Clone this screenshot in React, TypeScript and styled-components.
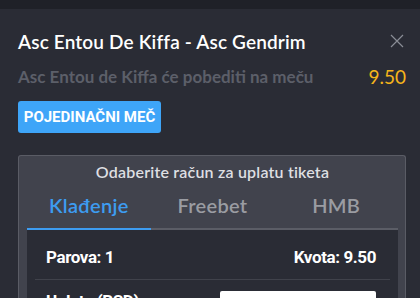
import { createGlobalStyle, styled } from "styled-components";

const GlobalStyle = createGlobalStyle`
  html, body {
    margin: 0;
    padding: 0;
    background: #2a2c35;
    font-family: Lato, "Open Sans", sans-serif;
    overflow: hidden;
  }
`;

const condensed = `"Liberation Sans Narrow", Roboto, sans-serif`;

const TopStrip = styled.div`
  height: 9px;
  background: #1f2128;
`;

const Panel = styled.div`
  padding: 19px 14px 0 18px;
`;

const HeaderRow = styled.div`
  display: flex;
  align-items: center;
  justify-content: space-between;
  height: 26px;
`;

const Title = styled.h2`
  margin: 0;
  font-size: 19px;
  font-weight: 600;
  color: #ffffff;
  letter-spacing: 0.15px;
`;

const CloseButton = styled.button`
  width: 16px;
  height: 16px;
  padding: 0;
  margin-right: 1px;
  border: none;
  background: transparent;
  display: flex;
  align-items: center;
  justify-content: center;
  cursor: pointer;
`;

const PickRow = styled.div`
  display: flex;
  align-items: center;
  justify-content: space-between;
  margin-top: 10px;
  height: 24px;
`;

const Pick = styled.span`
  font-size: 17px;
  font-weight: 700;
  color: #5c5f69;
`;

const Odds = styled.span`
  font-size: 19px;
  color: #f5b51b;
`;

const TypeBadge = styled.div`
  display: inline-flex;
  align-items: center;
  justify-content: center;
  margin-top: 13px;
  width: 143px;
  height: 32px;
  border-radius: 3px;
  background: #3ea5f8;
  color: #ffffff;
  font-family: ${condensed};
  font-size: 15px;
  font-weight: 700;
`;

const Card = styled.div`
  margin-top: 22px;
  border: 1px solid #5a5c65;
  border-bottom: none;
  border-radius: 3px 3px 0 0;
  background: #41434d;
  padding: 0 7px 0 8px;
  height: 200px;
`;

const CardTitle = styled.div`
  text-align: center;
  font-size: 16px;
  font-weight: 600;
  color: #dedfe2;
  padding-top: 6px;
  height: 22px;
  letter-spacing: 0.2px;
`;

const Tabs = styled.div`
  display: grid;
  grid-template-columns: repeat(3, 1fr);
  margin-top: 9px;
`;

const Tab = styled.div<{ $active?: boolean }>`
  text-align: center;
  font-size: 20px;
  font-weight: 600;
  letter-spacing: 0.3px;
  line-height: 24px;
  color: ${(p) => (p.$active ? "#3d9cf0" : "#9a9ca2")};
  padding-bottom: 11px;
  border-bottom: 2px solid ${(p) => (p.$active ? "#3d9cf0" : "#5b5d66")};
`;

const Inner = styled.div`
  background: #2a2c35;
  padding: 0 8px;
`;

const SummaryRow = styled.div`
  display: flex;
  justify-content: space-between;
  align-items: center;
  padding: 5px 14px 0 11px;
  height: 44px;
  border-bottom: 1px solid #40424b;
  font-family: ${condensed};
  font-size: 17px;
  font-weight: 700;
  letter-spacing: -0.4px;
  color: #ffffff;
`;

const StakeRow = styled.div`
  display: flex;
  justify-content: space-between;
  align-items: flex-start;
  padding: 11px 14px 0 11px;
  font-family: ${condensed};
  font-size: 17px;
  font-weight: 700;
  letter-spacing: -0.4px;
  color: #ffffff;
`;

const StakeInput = styled.div`
  width: 156px;
  height: 30px;
  background: #ffffff;
  border-radius: 2px;
`;

const CloseIcon = () => (
  <svg width="14" height="14" viewBox="0 0 14 14">
    <path d="M1 1 L13 13 M13 1 L1 13" stroke="#8a8d96" strokeWidth="1.2" />
  </svg>
);

export default function App() {
  return (
    <>
      <GlobalStyle />
      <TopStrip />
      <Panel>
        <HeaderRow>
          <Title>Asc Entou De Kiffa - Asc Gendrim</Title>
          <CloseButton aria-label="close">
            <CloseIcon />
          </CloseButton>
        </HeaderRow>
        <PickRow>
          <Pick>Asc Entou de Kiffa će pobediti na meču</Pick>
          <Odds>9.50</Odds>
        </PickRow>
        <TypeBadge>POJEDINAČNI MEČ</TypeBadge>
        <Card>
          <CardTitle>Odaberite račun za uplatu tiketa</CardTitle>
          <Tabs>
            <Tab $active>Klađenje</Tab>
            <Tab>Freebet</Tab>
            <Tab>HMB</Tab>
          </Tabs>
          <Inner>
            <SummaryRow>
              <span>Parova: 1</span>
              <span>Kvota: 9.50</span>
            </SummaryRow>
            <StakeRow>
              <span>Uplata (RSD)</span>
              <StakeInput />
            </StakeRow>
          </Inner>
        </Card>
      </Panel>
    </>
  );
}
